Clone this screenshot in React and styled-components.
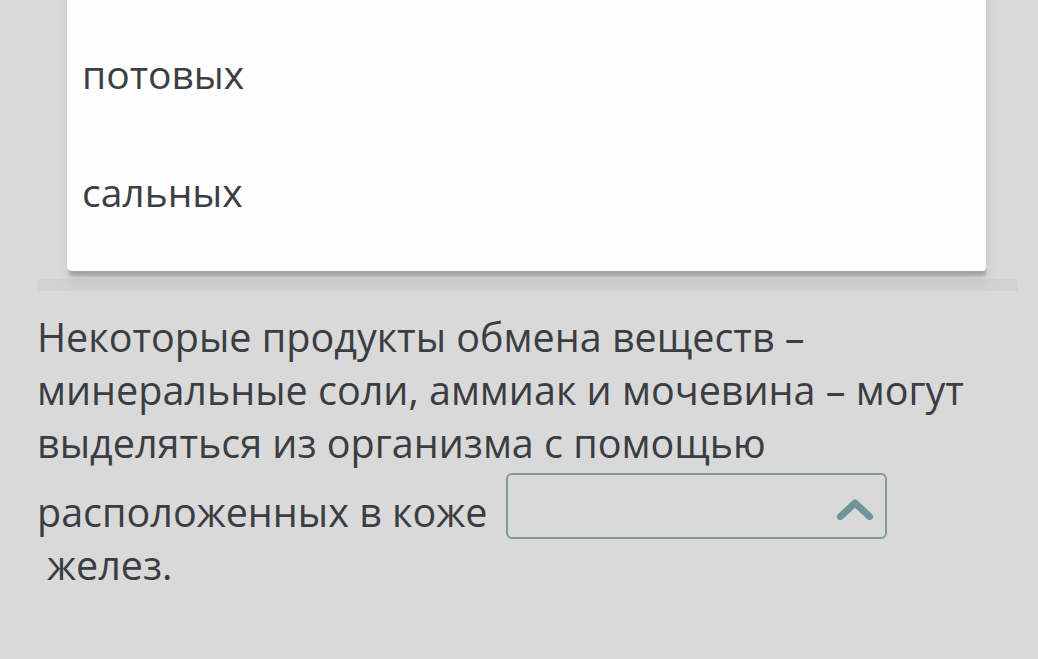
import React from "react";
import styled, { createGlobalStyle } from "styled-components";

const options = ["", "потовых", "сальных"];

function ChevronUp() {
  return (
    <svg width="38" height="26" viewBox="0 0 38 26">
      <path
        d="M4.5 21.5 L19 8 L33.5 21.5"
        fill="none"
        stroke="#6f9599"
        strokeWidth="7"
        strokeLinecap="round"
        strokeLinejoin="round"
      />
    </svg>
  );
}

export default function App() {
  return (
    <>
      <GlobalStyle />
      <Page>
        <MenuWrap>
          <Menu>
            {options.map((o, i) => (
              <Option key={i}>{o}</Option>
            ))}
          </Menu>
        </MenuWrap>
        <Question>
          <Text>
            Некоторые продукты обмена веществ – минеральные соли, аммиак и
            мочевина – могут выделяться из организма с помощью расположенных в
            коже{" "}
          </Text>
          <Select>
            <ChevronUp />
          </Select>
          <Tail>желез.</Tail>
        </Question>
      </Page>
    </>
  );
}

const GlobalStyle = createGlobalStyle`
  html, body {
    margin: 0;
    padding: 0;
    background: #d9d9d9;
    overflow: hidden;
  }
  body {
    font-family: "Open Sans", "Noto Sans", sans-serif;
  }
`;

const Page = styled.div`
  width: 1038px;
  height: 659px;
  background: #d9d9d9;
  overflow: hidden;
`;

const MenuWrap = styled.div`
  padding: 0 50px 0 67px;
  margin-top: -48px;
  position: relative;
  z-index: 1;
`;

const Menu = styled.div`
  background: #fefefe;
  border-radius: 5px;
  border-right: 2px solid #c9d3d3;
  box-shadow: 0 7px 3px -2px rgba(0, 0, 0, 0.2),
    0 12px 14px rgba(0, 0, 0, 0.06);
  padding-bottom: 29px;
`;

const Option = styled.div`
  height: 118px;
  display: flex;
  align-items: center;
  padding: 16px 15px 0;
  box-sizing: border-box;
  font-size: 39px;
  color: #3b3e42;
  &:first-child {
    height: 54px;
  }
`;

const Question = styled.div`
  margin: 8px 20px 0 37px;
  padding-top: 20px;
  border-top: 12px solid #d2d2d2;
  font-size: 39.5px;
  line-height: 53px;
  color: #3a3d41;
`;

const Text = styled.span``;

const Select = styled.span`
  display: inline-flex;
  vertical-align: bottom;
  align-items: center;
  justify-content: flex-end;
  box-sizing: border-box;
  width: 381px;
  height: 66px;
  margin: 3px 0 0 8px;
  padding: 3px 11px 0 0;
  border: 2px solid #7b9b9c;
  border-radius: 6px;
`;

const Tail = styled.span`
  display: block;
  padding-left: 10px;
`;
